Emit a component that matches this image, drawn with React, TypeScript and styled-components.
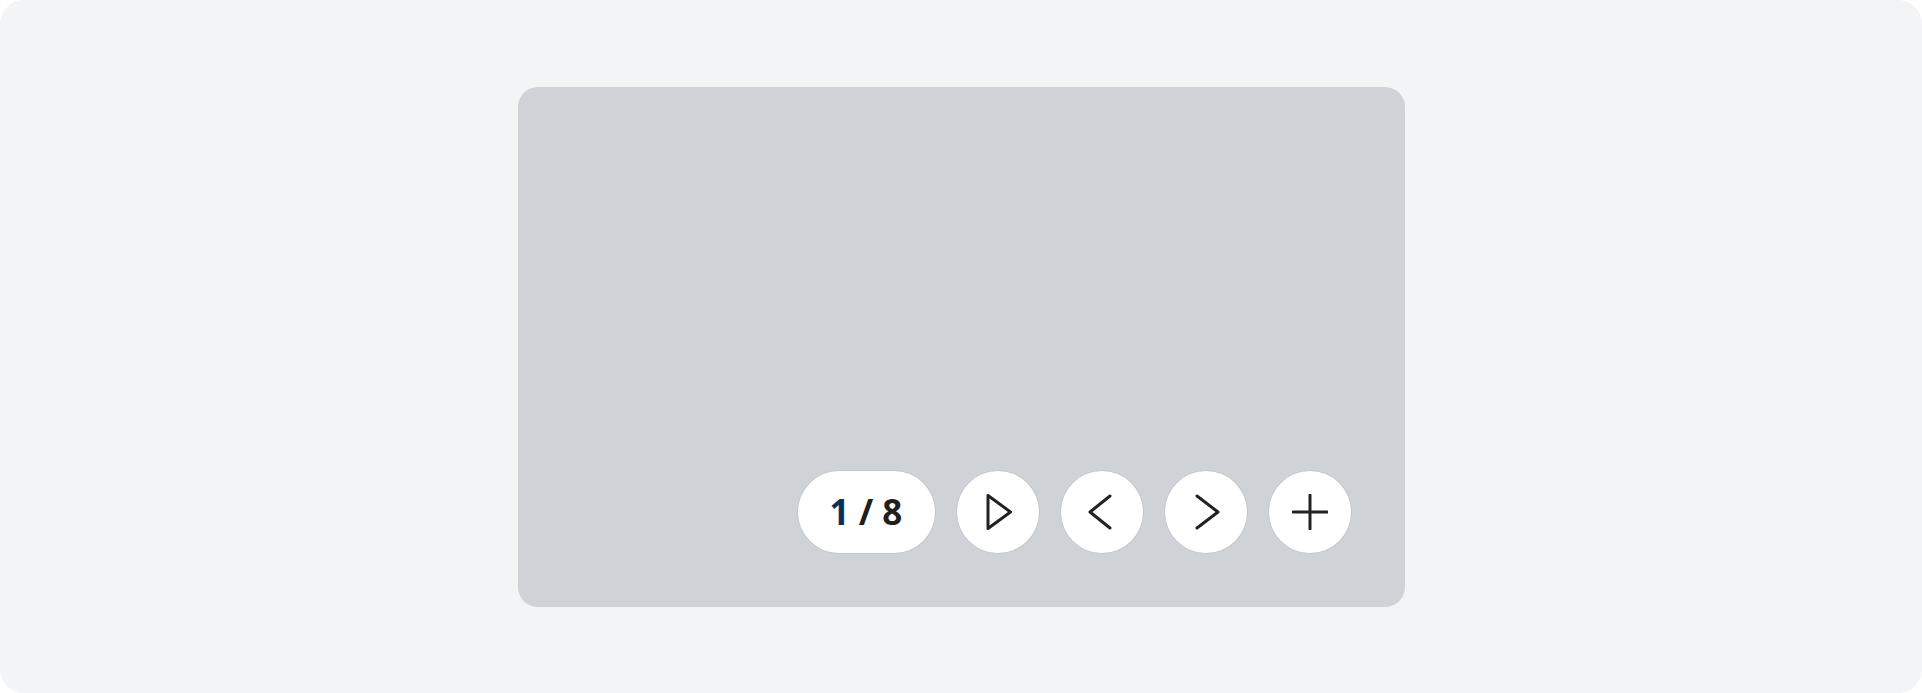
import React from 'react'
import styled, { createGlobalStyle } from 'styled-components'

const GlobalStyle = createGlobalStyle`
  html, body {
    margin: 0;
    padding: 0;
    background: #ffffff;
  }
  * {
    box-sizing: border-box;
  }
`

const Page = styled.div`
  width: 1922px;
  height: 693px;
  background-color: #f3f4f6;
  border-radius: 24px;
  display: flex;
  align-items: center;
  justify-content: center;
  font-family: "Noto Sans", "Open Sans", sans-serif;
`

const Stage = styled.div`
  width: 887px;
  height: 520px;
  background-color: #cfd2d6;
  border-radius: 20px;
  display: flex;
  align-items: flex-end;
  justify-content: flex-end;
  padding: 54px;
`

const Controls = styled.div`
  display: flex;
  align-items: center;
  gap: 22px;
`

const Counter = styled.div`
  width: 137px;
  height: 82px;
  border-radius: 41px;
  background: #ffffff;
  box-shadow: 0 0 0 1px rgba(0, 0, 0, 0.05);
  display: flex;
  align-items: center;
  justify-content: center;
  font-size: 35px;
  font-weight: 700;
  color: #1f1f1f;
  white-space: pre;
  line-height: 1;
`

const Current = styled.span`
  color: #0c2f5c;
`

const RoundButton = styled.button`
  width: 82px;
  height: 82px;
  border-radius: 50%;
  border: none;
  padding: 0;
  background: #ffffff;
  box-shadow: 0 0 0 1px rgba(0, 0, 0, 0.05);
  display: flex;
  align-items: center;
  justify-content: center;
  cursor: pointer;

  svg {
    width: 36px;
    height: 36px;
    fill: none;
    stroke: #222222;
    stroke-width: 3;
    stroke-linecap: round;
    stroke-linejoin: round;
  }
`

const icons: Record<string, string> = {
  play: 'M8 1.5 L8 34.5 L30.5 18 Z',
  prev: 'M26 2 L6 18 L26 34',
  next: 'M9 2 L30 18 L9 34',
  add: 'M18 1 V35 M1 18 H35',
}

const Icon: React.FC<{ name: string }> = ({ name }) => (
  <svg viewBox="0 0 36 36">
    <path d={icons[name]} />
  </svg>
)

export default function App() {
  const current = 1
  const total = 8
  return (
    <>
      <GlobalStyle />
      <Page>
        <Stage>
          <Controls>
            <Counter>
              <Current>{current}</Current>
              {` / ${total}`}
            </Counter>
            <RoundButton aria-label="Play"><Icon name="play" /></RoundButton>
            <RoundButton aria-label="Previous"><Icon name="prev" /></RoundButton>
            <RoundButton aria-label="Next"><Icon name="next" /></RoundButton>
            <RoundButton aria-label="Add"><Icon name="add" /></RoundButton>
          </Controls>
        </Stage>
      </Page>
    </>
  )
}
